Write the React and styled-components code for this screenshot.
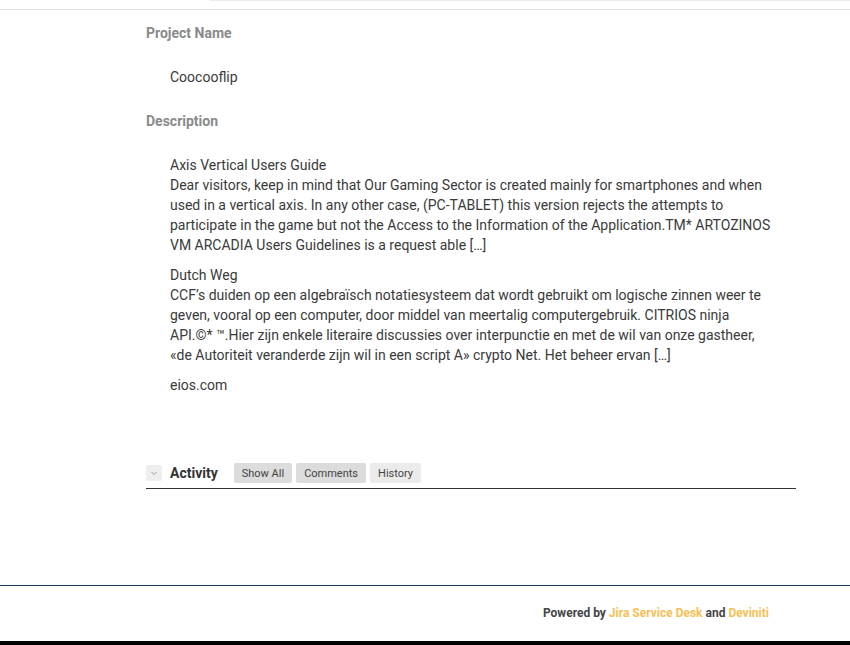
import styled, { createGlobalStyle } from 'styled-components';

const GlobalStyle = createGlobalStyle`
  html, body {
    margin: 0;
    padding: 0;
    background: #ffffff;
    font-family: Roboto, "Liberation Sans", sans-serif;
  }
`;

const Page = styled.div`
  display: flex;
  flex-direction: column;
  min-height: 645px;
  width: 850px;
`;

const TopBar = styled.div`
  height: 9px;
  border-bottom: 1px solid #dfe0e2;
  display: flex;
`;

const TopShade = styled.div`
  margin-left: 210px;
  flex: 1;
  height: 1px;
  background: #e9eaf0;
`;

const Main = styled.main`
  flex: 1;
  padding: 13px 54px 0 146px;
`;

const FieldLabel = styled.div`
  font-size: 14px;
  font-weight: 700;
  color: #8a8a8a;
  line-height: 20px;
  margin-top: ${p => p.$first ? '0' : '24px'};
`;

const FieldValue = styled.div`
  padding: 24px 0 0 24px;
  max-width: 602px;
  font-size: 14px;
  color: #3a3a3a;
  line-height: 20px;
`;

const Para = styled.p`
  margin: 0 0 10px;
  font-size: 14px;
  line-height: 20px;
  color: #3a3a3a;
  &:last-child { margin-bottom: 0; }
`;

const Activity = styled.div`
  margin-top: 68px;
  display: flex;
  align-items: center;
  height: 20px;
  padding-bottom: 5px;
  border-bottom: 1px solid #333;
`;

const Toggle = styled.button`
  width: 16px;
  height: 16px;
  border: none;
  border-radius: 2px;
  background: #eeeeee;
  padding: 0;
  display: flex;
  align-items: center;
  justify-content: center;
  margin-right: 8px;
`;

const ActivityTitle = styled.h3`
  margin: 0 16px 0 0;
  font-size: 14px;
  font-weight: 700;
  color: #333;
`;

const Tabs = styled.div`
  display: flex;
  gap: 4px;
`;

const Tab = styled.button`
  border: none;
  border-radius: 2px;
  height: 20px;
  padding: 0 8px;
  font-family: inherit;
  font-size: 11px;
  color: #444;
  background: ${p => p.$active ? '#dcdcdc' : '#ebebeb'};
`;

const Footer = styled.footer`
  border-top: 1px solid #1d3a5f;
  height: 53px;
  padding-bottom: 2px;
  display: flex;
  align-items: center;
  justify-content: flex-end;
  padding-right: 81px;
`;

const Powered = styled.div`
  font-size: 12px;
  font-weight: 700;
  color: #444;
`;

const Brand = styled.span`
  color: #f9bf54;
`;

const BottomBar = styled.div`
  height: 4px;
  background: #000;
`;

const App = () => {
  return (
    <>
      <GlobalStyle />
      <Page>
        <TopBar>
          <TopShade />
        </TopBar>
        <Main>
          <FieldLabel $first>Project Name</FieldLabel>
          <FieldValue>Coocooflip</FieldValue>
          <FieldLabel>Description</FieldLabel>
          <FieldValue>
            <Para>
              Axis Vertical Users Guide<br />
              Dear visitors, keep in mind that Our Gaming Sector is created mainly for smartphones and when used in a vertical axis. In any other case, (PC-TABLET) this version rejects the attempts to participate in the game but not the Access to the Information of the Application.TM* ARTOZINOS VM ARCADIA Users Guidelines is a request able […]
            </Para>
            <Para>
              Dutch Weg<br />
              CCF’s duiden op een algebraïsch notatiesysteem dat wordt gebruikt om logische zinnen weer te geven, vooral op een computer, door middel van meertalig computergebruik. CITRIOS ninja API.©* ™.Hier zijn enkele literaire discussies over interpunctie en met de wil van onze gastheer, «de Autoriteit veranderde zijn wil in een script A» crypto Net. Het beheer ervan […]
            </Para>
            <Para>eios.com</Para>
          </FieldValue>
          <Activity>
            <Toggle aria-label="Collapse">
              <svg width="8" height="8" viewBox="0 0 8 8">
                <path d="M1.5 3l2.5 2.5 2.5-2.5" fill="none" stroke="#999" strokeWidth="1" />
              </svg>
            </Toggle>
            <ActivityTitle>Activity</ActivityTitle>
            <Tabs>
              <Tab $active>Show All</Tab>
              <Tab $active>Comments</Tab>
              <Tab>History</Tab>
            </Tabs>
          </Activity>
        </Main>
        <Footer>
          <Powered>
            Powered by <Brand>Jira Service Desk</Brand> and <Brand>Deviniti</Brand>
          </Powered>
        </Footer>
        <BottomBar />
      </Page>
    </>
  );
};

export default App;
